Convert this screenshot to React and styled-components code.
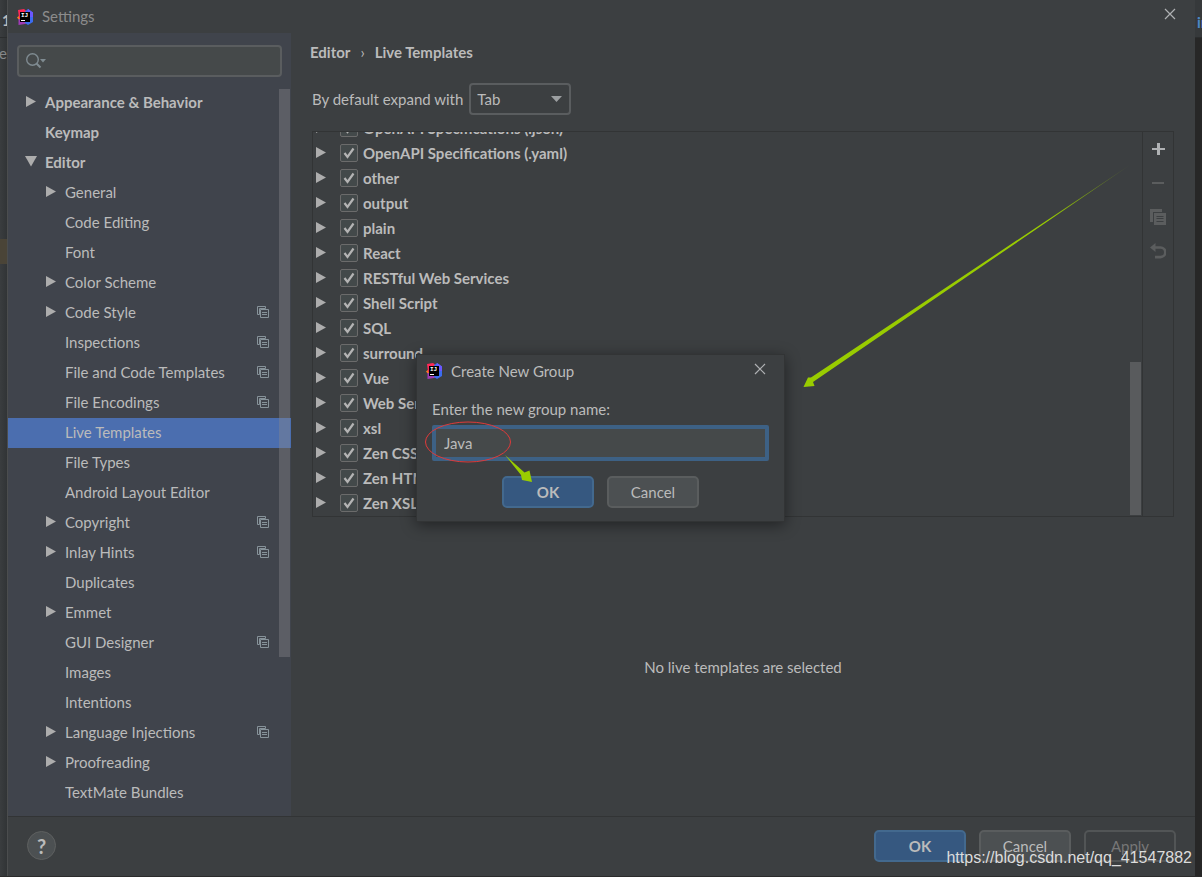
import React from 'react';
import styled, { createGlobalStyle } from 'styled-components';

const GlobalStyle = createGlobalStyle`
  * {
    box-sizing: border-box;
  }
  body {
    margin: 0;
    background: #2b2b2b;
  }
  body, button, input, select {
    font-family: Lato, 'Open Sans', sans-serif;
    font-size: 15px;
    line-height: 20px;
    color: #bbbbbb;
  }
`;

const Desktop = styled.div`
  display: flex;
  position: relative;
  height: 100vh;
  min-height: 640px;
  padding-bottom: 1px;
  overflow: hidden;
`;

const LeftStrip = styled.div`
  display: flex;
  flex-direction: column;
  flex: 0 0 8px;
  overflow: hidden;
  background: linear-gradient(to right, #3a3d3f, #313436);
  border-right: 1px solid #4b4d4e;
  .tab {
    height: 38px;
    padding-top: 10px;
    border-bottom: 1px solid #2b2d2e;
    font-weight: bold;
    text-indent: 2px;
  }
  .file {
    display: flex;
    justify-content: flex-end;
    height: 201px;
    padding-top: 5px;
    color: #85888a;
  }
  .mark {
    height: 25px;
    background: #4a4437;
  }
`;

const RightStrip = styled.div`
  flex: 0 0 7px;
  overflow: hidden;
  background: #272727;
  .tab {
    height: 38px;
    padding: 12px 0 0 2px;
    background: #36393b;
    border-bottom: 1px solid #2b2d2e;
    color: #4a88c7;
    font-weight: bold;
  }
`;

const Window = styled.div`
  display: flex;
  flex-direction: column;
  flex: 1;
  min-width: 0;
  background: #3c3f41;
`;

const TitleBar = styled.header`
  display: flex;
  align-items: center;
  flex: none;
  height: 33px;
  padding: ${(props) => (props.$modal ? '0 18px 0 9px' : '0 19px 0 9px')};
  gap: 9px;
  color: ${(props) => (props.$modal ? '#bbbbbb' : '#8c8c8c')};
  h1 {
    flex: 1;
    margin: 0;
    padding-bottom: 1px;
    font-size: 15px;
    font-weight: normal;
  }
`;

const IconButton = styled.button`
  display: flex;
  padding: 0;
  border: 0;
  background: none;
  color: ${(props) => props.$color || '#afb1b3'};
`;

const CloseButton = styled(IconButton)`
  margin-bottom: 5px;
`;

const Body = styled.div`
  display: flex;
  flex: 1;
  min-height: 0;
`;

const Sidebar = styled.aside`
  display: flex;
  flex-direction: column;
  flex: 0 0 283px;
  background: #40444c;
`;

const SearchBox = styled.label`
  display: flex;
  align-items: center;
  flex: none;
  height: 32px;
  margin: 12px 9px 11px;
  padding-left: 7px;
  background: #45494a;
  border: 2px solid #5a5d5f;
  border-radius: 4px;
  input {
    flex: 1;
    min-width: 0;
    border: 0;
    outline: 0;
    background: none;
  }
`;

const TreeArea = styled.nav`
  position: relative;
  flex: 1;
  min-height: 0;
  overflow: hidden;
`;

const Tree = styled.ul`
  margin: 0;
  padding: 0;
  list-style: none;
`;

const TreeRow = styled.li`
  display: flex;
  align-items: center;
  height: 30px;
  padding: 0 22px 3px ${(props) => (props.$top ? '17px' : '37px')};
  font-weight: ${(props) => (props.$top ? 'bold' : 'normal')};
  background: ${(props) => (props.$selected ? '#4b6eaf' : 'none')};
  .arrow {
    display: flex;
    flex: 0 0 20px;
  }
  .name {
    flex: 1;
    white-space: nowrap;
  }
`;

const SidebarThumb = styled.div`
  position: absolute;
  top: 1px;
  right: 1px;
  width: 11px;
  height: 78%;
  background: rgba(134, 134, 140, 0.4);
`;

const Content = styled.main`
  display: flex;
  flex-direction: column;
  flex: 1;
  min-width: 0;
  padding: 0 21px 0 21px;
`;

const Breadcrumb = styled.h2`
  display: flex;
  flex: none;
  gap: 10px;
  margin: 9px 0 21px -2px;
  font-size: 15px;
  line-height: 20px;
  span {
    font-weight: normal;
  }
`;

const ExpandRow = styled.div`
  display: flex;
  align-items: center;
  flex: none;
  gap: 6px;
  margin-bottom: 16px;
`;

const SelectBox = styled.div`
  display: grid;
  align-items: center;
  width: 102px;
  select, svg {
    grid-area: 1 / 1;
  }
  select {
    appearance: none;
    height: 32px;
    padding: 0 6px;
    background: #3c3f41;
    border: 2px solid #5a5d5f;
    border-radius: 4px;
  }
  svg {
    justify-self: end;
    margin-right: 9px;
    pointer-events: none;
  }
`;

const Panel = styled.section`
  display: flex;
  flex: none;
  height: 386px;
  border: 1px solid #323435;
`;

const TemplateList = styled.ul`
  display: flex;
  flex-direction: column;
  justify-content: flex-end;
  flex: 1;
  margin: 0;
  padding: 0 0 1px 2px;
  overflow: hidden;
  list-style: none;
`;

const TemplateRow = styled.li`
  display: flex;
  align-items: center;
  flex: none;
  height: 25px;
  font-weight: bold;
  label {
    display: flex;
    align-items: center;
    gap: 5px;
    margin-left: 13px;
  }
`;

const Check = styled.span`
  display: grid;
  input, svg {
    grid-area: 1 / 1;
  }
  input {
    appearance: none;
    width: 18px;
    height: 18px;
    margin: 0;
    background: #43494a;
    border: 1px solid #6b6b6b;
    border-radius: 2px;
  }
  svg {
    display: none;
    pointer-events: none;
  }
  input:checked + svg {
    display: block;
  }
`;

const ListScroll = styled.div`
  display: flex;
  flex-direction: column;
  justify-content: flex-end;
  flex: 0 0 12px;
  padding-bottom: 1px;
  div {
    width: 11px;
    height: 40%;
    background: #595b5d;
  }
`;

const Toolbar = styled.div`
  display: flex;
  flex-direction: column;
  align-items: center;
  flex: 0 0 31px;
  gap: 18px;
  padding-top: 9px;
  border-left: 1px solid #323435;
`;

const EmptyState = styled.p`
  display: flex;
  align-items: center;
  justify-content: center;
  flex: 1;
  margin: 0;
`;

const Footer = styled.footer`
  display: flex;
  align-items: center;
  flex: none;
  gap: 13px;
  height: 60px;
  padding: 0 19px 2px;
  border-top: 1px solid #323435;
`;

const HelpButton = styled.button`
  width: 29px;
  height: 29px;
  margin-right: auto;
  padding: 0;
  background: #4c5052;
  border: 1px solid #5e6060;
  border-radius: 50%;
  font-size: 20px;
  font-weight: bold;
`;

const Button = styled.button`
  width: 92px;
  height: 32px;
  padding: 0;
  background: ${(props) => (props.$primary ? '#365880' : '#4c5052')};
  border: 2px solid ${(props) => (props.$primary ? '#43698e' : '#5a5d5e')};
  border-radius: 5px;
  font-weight: ${(props) => (props.$primary ? 'bold' : 'normal')};
  &:disabled {
    background: none;
    border-color: #525556;
    color: #777777;
  }
`;

const Overlay = styled.div`
  display: flex;
  align-items: center;
  justify-content: center;
  position: absolute;
  inset: 0;
  padding: 0 1px 2px 0;
`;

const Modal = styled.form`
  position: relative;
  width: 369px;
  background: #3c3f41;
  border: 1px solid #323435;
  box-shadow: 0 3px 14px rgba(0, 0, 0, 0.45);
`;

const Field = styled.div`
  display: flex;
  flex-direction: column;
  gap: 6px;
  margin: 11px 15px 15px;
  input {
    width: 100%;
    height: 36px;
    padding: 0 8px;
    background: #45494a;
    border: 4px solid #3d6185;
    border-radius: 2px;
    outline: 0;
  }
`;

const Actions = styled.div`
  display: flex;
  justify-content: center;
  gap: 13px;
  padding-bottom: 13px;
`;

// Hand-drawn marks that sit over the dialog
const Marks = styled.svg`
  position: absolute;
  left: 0;
  top: -200px;
  overflow: visible;
  pointer-events: none;
`;

const Watermark = styled.div`
  position: absolute;
  right: 10px;
  bottom: 9px;
  font-family: 'Liberation Sans', Arial, sans-serif;
  font-size: 16px;
  color: #dcdcdc;
`;

const Logo = () => (
  <svg width="16" height="16" viewBox="0 0 16 16" aria-hidden="true">
    <path d="M0 8.500 3 6l3 3-3 3z" fill="#fc801d" />
    <path d="M1 1 7 0l3 2.500L6 9H2z" fill="#fe2857" />
    <path d="M1.500 10 8 9l2 5-2 1-6.500 1z" fill="#a03bb5" />
    <path d="M8 2.500 11 0l5 3.500V13l-5 3-3-2z" fill="#3b6cf0" />
    <path d="M11 0l5 3.500V8h-5z" fill="#6b57ff" />
    <rect x="3" y="3" width="10" height="10" fill="#000000" />
    <rect x="4" y="11" width="4" height="1" fill="#ffffff" />
    <text x="4" y="8" fontFamily="Liberation Mono" fontSize="6" fontWeight="bold" fill="#ffffff">
      IJ
    </text>
  </svg>
);

const CloseIcon = () => (
  <svg width="12" height="12" viewBox="0 0 12 12">
    <path d="M1 1l10 10M11 1 1 11" stroke="currentColor" strokeWidth="1.200" />
  </svg>
);

const SearchIcon = () => (
  <svg width="22" height="16" viewBox="0 0 22 16" fill="none" aria-hidden="true">
    <circle cx="6.500" cy="6.500" r="5.800" stroke="#7f8b91" strokeWidth="1.400" />
    <path d="M10.500 10.500l4 4" stroke="#7f8b91" strokeWidth="2" />
    <path d="M14 6h6L17 9.500z" fill="#7f8b91" />
  </svg>
);

const Arrow = ({ open }) => (
  <svg width="12" height="12" viewBox="0 0 12 12" aria-hidden="true">
    <path d={open ? 'M0 0h12L6 10.500z' : 'M1 0l10 5.500L1 11z'} fill="#adadad" />
  </svg>
);

const ProjectIcon = () => (
  <svg width="12" height="12" viewBox="0 0 12 12" fill="none" stroke="#87939a" aria-hidden="true">
    <path d="M2.500 8.500h-2v-8h8v2M2.500 8.500v-6h6" />
    <path d="M3.500 3.500h8v8h-8zM5 6.500h5M5 8.500h5" />
  </svg>
);

const CheckIcon = () => (
  <svg width="18" height="18" viewBox="0 0 18 18" fill="none">
    <path d="M4.500 9 7.500 13 13.500 4.500" stroke="#b4b4b4" strokeWidth="2.200" />
  </svg>
);

const PlusIcon = () => (
  <svg width="16" height="16" viewBox="0 0 16 16">
    <path d="M7 2h3v5h5v2h-5v5H7V9H2V7h5z" fill="currentColor" />
  </svg>
);

const MinusIcon = () => (
  <svg width="16" height="16" viewBox="0 0 16 16">
    <path d="M2 7h12v2H2z" fill="currentColor" />
  </svg>
);

const CopyIcon = () => (
  <svg width="16" height="16" viewBox="0 0 16 16">
    <path d="M0 0h12v3H3v10H0z" fill="currentColor" />
    <path d="M4 4h12v12H4z" fill="currentColor" />
    <path d="M6.500 7.500h7M6.500 9.500h7M6.500 12.500h7" stroke="#3c3f41" />
  </svg>
);

const UndoIcon = () => (
  <svg width="16" height="16" viewBox="0 0 16 16">
    <path d="M0 4.500 5.500 0v9z" fill="currentColor" />
    <path d="M5 4.500h5.500a4.800 4.800 0 0 1 0 9.600H5" fill="none" stroke="currentColor" strokeWidth="2.600" />
  </svg>
);

const settings = [
  { name: 'Appearance & Behavior', top: true, arrow: 'closed' },
  { name: 'Keymap', top: true },
  { name: 'Editor', top: true, arrow: 'open' },
  { name: 'General', arrow: 'closed' },
  { name: 'Code Editing' },
  { name: 'Font' },
  { name: 'Color Scheme', arrow: 'closed' },
  { name: 'Code Style', arrow: 'closed', project: true },
  { name: 'Inspections', project: true },
  { name: 'File and Code Templates', project: true },
  { name: 'File Encodings', project: true },
  { name: 'Live Templates', selected: true },
  { name: 'File Types' },
  { name: 'Android Layout Editor' },
  { name: 'Copyright', arrow: 'closed', project: true },
  { name: 'Inlay Hints', arrow: 'closed', project: true },
  { name: 'Duplicates' },
  { name: 'Emmet', arrow: 'closed' },
  { name: 'GUI Designer', project: true },
  { name: 'Images' },
  { name: 'Intentions' },
  { name: 'Language Injections', arrow: 'closed', project: true },
  { name: 'Proofreading', arrow: 'closed' },
  { name: 'TextMate Bundles' },
];

const groups = [
  'OpenAPI Specifications (.json)',
  'OpenAPI Specifications (.yaml)',
  'other',
  'output',
  'plain',
  'React',
  'RESTful Web Services',
  'Shell Script',
  'SQL',
  'surround',
  'Vue',
  'Web Services',
  'xsl',
  'Zen CSS',
  'Zen HTML',
  'Zen XSL',
];

function SettingsTree() {
  return (
    <Sidebar>
      <SearchBox aria-label="Search settings">
        <SearchIcon />
        <input type="text" />
      </SearchBox>
      <TreeArea>
        <Tree>
          {settings.map((item) => (
            <TreeRow key={item.name} $top={item.top} $selected={item.selected}>
              <span className="arrow">
                {item.arrow && <Arrow open={item.arrow === 'open'} />}
              </span>
              <span className="name">{item.name}</span>
              {item.project && <ProjectIcon />}
            </TreeRow>
          ))}
        </Tree>
        <SidebarThumb />
      </TreeArea>
    </Sidebar>
  );
}

function LiveTemplates() {
  return (
    <Content>
      <Breadcrumb>
        Editor <span>›</span> Live Templates
      </Breadcrumb>
      <ExpandRow>
        <label htmlFor="expand">By default expand with</label>
        <SelectBox>
          <select id="expand" defaultValue="Tab">
            <option>Tab</option>
            <option>Enter</option>
            <option>Space</option>
          </select>
          <svg width="11" height="6" viewBox="0 0 11 6">
            <path d="M0 0h11L5.500 6z" fill="#9c9fa1" />
          </svg>
        </SelectBox>
      </ExpandRow>
      <Panel>
        <TemplateList>
          {groups.map((group) => (
            <TemplateRow key={group}>
              <Arrow />
              <label>
                <Check>
                  <input type="checkbox" defaultChecked />
                  <CheckIcon />
                </Check>
                {group}
              </label>
            </TemplateRow>
          ))}
        </TemplateList>
        <ListScroll>
          <div />
        </ListScroll>
        <Toolbar>
          <IconButton aria-label="Add">
            <PlusIcon />
          </IconButton>
          <IconButton aria-label="Remove" $color="#5b5d5e">
            <MinusIcon />
          </IconButton>
          <IconButton aria-label="Duplicate" $color="#5b5d5e">
            <CopyIcon />
          </IconButton>
          <IconButton aria-label="Revert" $color="#5b5d5e">
            <UndoIcon />
          </IconButton>
        </Toolbar>
      </Panel>
      <EmptyState>No live templates are selected</EmptyState>
    </Content>
  );
}

function CreateGroup() {
  return (
    <Overlay>
      <Modal onSubmit={(e) => e.preventDefault()}>
        <TitleBar $modal>
          <Logo />
          <h1>Create New Group</h1>
          <CloseButton type="button" aria-label="Close">
            <CloseIcon />
          </CloseButton>
        </TitleBar>
        <Field>
          <label htmlFor="group">Enter the new group name:</label>
          <input id="group" type="text" defaultValue="Java" />
        </Field>
        <Actions>
          <Button $primary>OK</Button>
          <Button type="button">Cancel</Button>
        </Actions>
        <Marks width="369" height="366" viewBox="0 0 369 366" aria-hidden="true">
          <defs>
            <linearGradient id="fade" x1="1" y1="0" x2="0" y2="1">
              <stop offset="0" stopColor="#99cc00" stopOpacity="0.200" />
              <stop offset="0.250" stopColor="#99cc00" />
            </linearGradient>
          </defs>
          <path
            d="M713 10 394 222.500 391 222.500 386.500 232 397.500 231 396 227z"
            fill="url(#fade)"
          />
          <ellipse cx="51" cy="287" rx="42.500" ry="20" fill="none" stroke="#e03a3a" />
          <path d="M88 300 107.500 317.500 112.500 315.500 115 327 105 325 104 320z" fill="#99cc00" />
        </Marks>
      </Modal>
    </Overlay>
  );
}

export default function App() {
  return (
    <>
      <GlobalStyle />
      <Desktop>
        <LeftStrip>
          <div className="tab">1</div>
          <div className="file">pe</div>
          <div className="mark" />
        </LeftStrip>
        <Window>
          <TitleBar>
            <Logo />
            <h1>Settings</h1>
            <CloseButton aria-label="Close">
              <CloseIcon />
            </CloseButton>
          </TitleBar>
          <Body>
            <SettingsTree />
            <LiveTemplates />
          </Body>
          <Footer>
            <HelpButton aria-label="Help">?</HelpButton>
            <Button $primary>OK</Button>
            <Button>Cancel</Button>
            <Button disabled>Apply</Button>
          </Footer>
        </Window>
        <RightStrip>
          <div className="tab">in</div>
        </RightStrip>
        <CreateGroup />
        <Watermark>https://blog.csdn.net/qq_41547882</Watermark>
      </Desktop>
    </>
  );
}
